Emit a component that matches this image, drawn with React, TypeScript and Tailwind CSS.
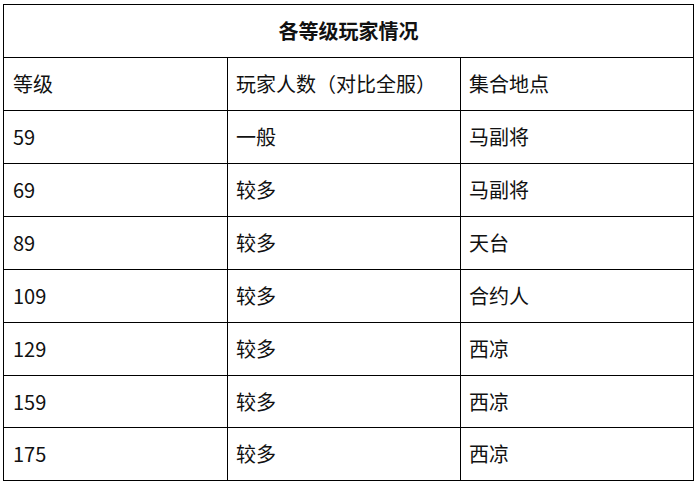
const ROWS: { level: string; count: string; place: string; h: string }[] = [
  { level: "59", count: "一般", place: "马副将", h: "h-[53px]" },
  { level: "69", count: "较多", place: "马副将", h: "h-[53px]" },
  { level: "89", count: "较多", place: "天台", h: "h-[53px]" },
  { level: "109", count: "较多", place: "合约人", h: "h-[53px]" },
  { level: "129", count: "较多", place: "西凉", h: "h-[53px]" },
  { level: "159", count: "较多", place: "西凉", h: "h-[52px]" },
  { level: "175", count: "较多", place: "西凉", h: "h-[53px]" },
];

function Cell({ children, h, first }: { children: React.ReactNode; h: string; first?: boolean }) {
  return (
    <div
      className={`${h} flex items-center border-r border-b border-black ${first ? "pl-[9px]" : "pl-[8px]"}`}
    >
      {children}
    </div>
  );
}

export default function App() {
  return (
    <div className="h-[485px] w-[700px] bg-white pl-[3px] pt-[4px] text-[20px] text-[#111] font-['Microsoft_YaHei','Noto_Sans_CJK_SC',sans-serif]">
      <div className="w-[691px] border-l border-t border-black">
        <div className="flex h-[53px] items-center justify-center border-r border-b border-black font-bold">
          各等级玩家情况
        </div>
        <div className="grid grid-cols-[224px_233px_233px]">
          <Cell h="h-[53px]" first>
            等级
          </Cell>
          <Cell h="h-[53px]">玩家人数（对比全服）</Cell>
          <Cell h="h-[53px]">集合地点</Cell>
          {ROWS.map((r) => (
            <div key={r.level} className="contents">
              <Cell h={r.h} first>
                {r.level}
              </Cell>
              <Cell h={r.h}>{r.count}</Cell>
              <Cell h={r.h}>{r.place}</Cell>
            </div>
          ))}
        </div>
      </div>
    </div>
  );
}
